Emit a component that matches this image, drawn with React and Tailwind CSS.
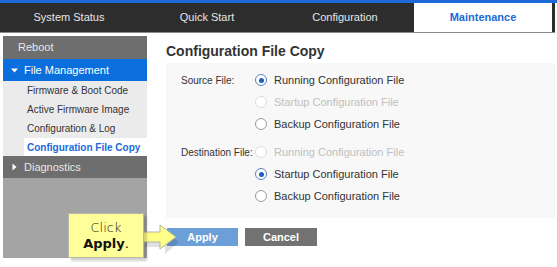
import React from "react";

function Radio({ checked, disabled, label }) {
  return (
    <div className="flex items-center h-[22px]">
      <span
        className={
          "w-[12px] h-[12px] rounded-full border flex items-center justify-center bg-white " +
          (disabled ? "border-[#dcdcdc]" : checked ? "border-[#5a83c0]" : "border-[#9a9a9a]")
        }
      >
        {checked && <span className="w-[5px] h-[5px] rounded-full bg-[#1a5fc4]" />}
      </span>
      <span className={"ml-[7px] text-[11px] whitespace-nowrap " + (disabled ? "text-[#c0c0c0]" : "text-[#333333]")}>
        {label}
      </span>
    </div>
  );
}

export default function App() {
  const tabs = ["System Status", "Quick Start", "Configuration"];
  return (
    <div className="w-[557px] h-[267px] bg-white relative overflow-hidden font-['Liberation_Sans',Arial,sans-serif]">
      <div className="h-[3px] bg-[#1b6ad8]" />
      <div className="flex h-[30px] w-[555px] bg-[#2d2d2d] border-b border-[#8a8a8a]">
        {tabs.map((t) => (
          <div key={t} className="w-[138px] flex items-center justify-center text-[11px] text-[#e6e6e6]">
            {t}
          </div>
        ))}
        <div className="w-[138px] bg-white flex items-center justify-center text-[11px] font-bold text-[#1a6ad8]">
          Maintenance
        </div>
      </div>
      <div className="flex pt-[3px]">
        <div className="ml-[3px] w-[144px] h-[222px] flex flex-col bg-[#a4a4a4]">
          <div className="h-[23px] bg-[#6e6e6e] flex items-center pl-[15px] text-[11px] text-[#e8e8e8]">
            Reboot
          </div>
          <div className="h-[22px] bg-[#0a6fdc] flex items-center pl-[8px] text-[11px] text-white">
            <svg width="7" height="7" viewBox="0 0 7 7" className="mr-[6px]">
              <path d="M0 1.5 L7 1.5 L3.5 5.5 Z" fill="white" />
            </svg>
            File Management
          </div>
          <div className="bg-[#ebebeb]">
            {["Firmware & Boot Code", "Active Firmware Image", "Configuration & Log"].map((s) => (
              <div key={s} className="h-[19px] flex items-center pl-[24px] text-[10px] text-[#333] whitespace-nowrap">
                {s}
              </div>
            ))}
            <div className="h-[18px] flex items-center ml-[21px] pl-[3px] text-[10px] font-bold text-[#1a6ad8] bg-white whitespace-nowrap">
              Configuration File Copy
            </div>
          </div>
          <div className="h-[22px] bg-[#6e6e6e] flex items-center pl-[8px] text-[11px] text-[#e8e8e8]">
            <svg width="7" height="8" viewBox="0 0 7 8" className="mr-[6px]">
              <path d="M1.5 0.5 L5.5 4 L1.5 7.5 Z" fill="white" />
            </svg>
            Diagnostics
          </div>
        </div>
        <div className="ml-[19px] flex-1 pr-[2px]">
          <div className="mt-[6px] h-[18px] text-[14px] font-bold text-[#333] leading-[18px]">
            Configuration File Copy
          </div>
          <div className="mt-[3px] bg-[#f8f8f8] pt-[6px] pb-[11px] pl-[15px]">
            <div className="flex">
              <div className="w-[74px] shrink-0 h-[22px] flex items-center text-[10px] text-[#333] whitespace-nowrap">Source File:</div>
              <div className="flex flex-col">
                <Radio checked label="Running Configuration File" />
                <Radio disabled label="Startup Configuration File" />
                <Radio label="Backup Configuration File" />
              </div>
            </div>
            <div className="flex mt-[6px]">
              <div className="w-[74px] shrink-0 h-[22px] flex items-center text-[10px] text-[#333] whitespace-nowrap">Destination File:</div>
              <div className="flex flex-col">
                <Radio disabled label="Running Configuration File" />
                <Radio checked label="Startup Configuration File" />
                <Radio label="Backup Configuration File" />
              </div>
            </div>
          </div>
          <div className="flex gap-[7px] mt-[10px] ml-[1px]">
            <div className="w-[71px] h-[18px] bg-[#6c9fd8] flex items-center justify-center text-[11px] font-bold text-white">
              Apply
            </div>
            <div className="w-[72px] h-[18px] bg-[#727272] flex items-center justify-center text-[11px] font-bold text-white">
              Cancel
            </div>
          </div>
        </div>
      </div>
      <svg className="absolute left-[138px] top-[222px]" width="44" height="32" viewBox="0 0 44 32">
        <path d="M4 12 L24 12 L24 5 L38 17 L24 29 L24 22 L4 22 Z" fill="#000" opacity="0.12" transform="translate(3,3)" />
        <path d="M0 10 L22 10 L22 3 L38 15 L22 27 L22 20 L0 20 Z" fill="#ffff88" stroke="#b5b5a0" strokeWidth="1" />
      </svg>
      <div className="absolute left-[68px] top-[213px] w-[76px] h-[45px] bg-[#ffff99] border border-[#b8b8a8] shadow-[3px_3px_2px_rgba(0,0,0,0.18)] flex flex-col items-center justify-center font-['DejaVu_Sans',sans-serif] text-[13px] leading-[16px] text-[#111]">
        <div className="font-light">Click</div>
        <div>
          <span className="font-bold">Apply</span>.
        </div>
      </div>
    </div>
  );
}
